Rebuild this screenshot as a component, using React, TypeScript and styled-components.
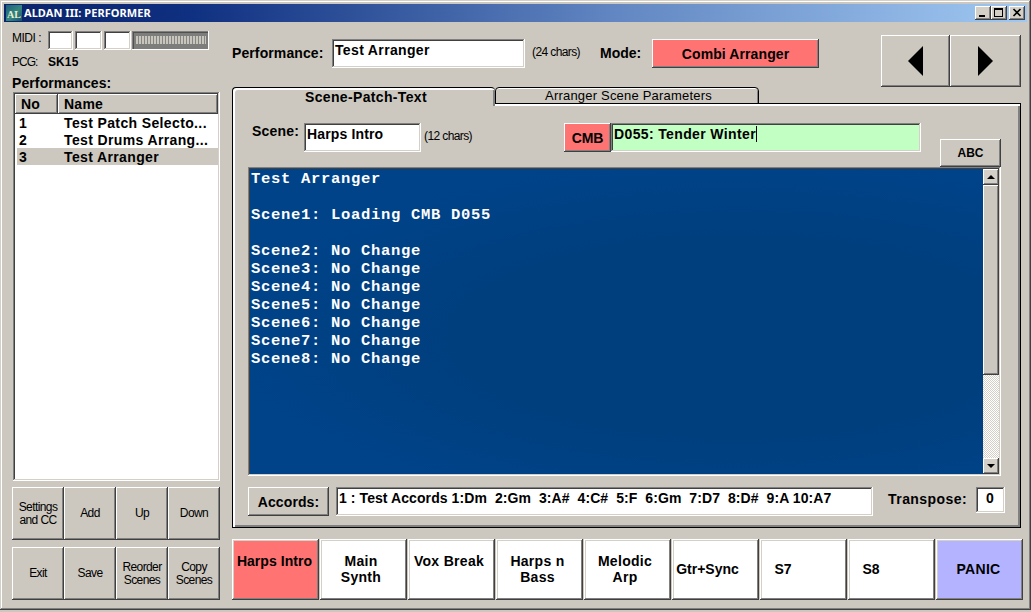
import React, { FC, ReactNode } from "react";
import styled, { createGlobalStyle, css } from "styled-components";

const FACE = "#ccc8bf";
const RED = "#ff7373";

const raised = css`
  box-shadow: inset -1px -1px #404040, inset 1px 1px #fff,
    inset -2px -2px #808080;
`;

const sunken = css`
  box-shadow: inset -1px -1px #fff, inset 1px 1px #808080,
    inset -2px -2px #d4d0c8, inset 2px 2px #404040;
`;

const GlobalStyle = createGlobalStyle`
  * {
    box-sizing: border-box;
  }
  body {
    margin: 0;
    background: ${FACE};
    color: #000;
    font-family: "Liberation Sans", Arial, sans-serif;
    font-size: 13px;
    line-height: 16px;
    overflow: hidden;
  }
`;

const Window = styled.div`
  width: 1031px;
  height: 610px;
  padding: 4px;
  background: ${FACE};
  box-shadow: inset -1px -1px #404040, inset 1px 1px #d4d0c8,
    inset -2px -2px #808080, inset 2px 2px #fff;
`;

const TitleBar = styled.div`
  display: flex;
  align-items: center;
  height: 18px;
  padding: 0 2px;
  background: linear-gradient(90deg, #0a246a, #0f2f80 18%, #6287c2 60%, #a0c8f2);
`;

const TitleText = styled.div`
  flex: 1;
  margin-left: 2px;
  color: #fff;
  font-family: "Noto Sans", sans-serif;
  font-weight: bold;
  font-size: 11px;
  letter-spacing: 0.05px;
`;

const CaptionButton = styled.div<{ $gap?: number }>`
  width: 16px;
  height: 14px;
  margin-left: ${({ $gap }) => $gap || 0}px;
  background: #d4d0c8;
  ${raised}
  svg {
    display: block;
  }
`;

const Body = styled.div`
  display: flex;
  gap: 12px;
  padding: 9px 0 0 8px;
`;

const Sidebar = styled.div`
  width: 208px;
  display: flex;
  flex-direction: column;
`;

const Text = styled.span<{ $size?: number; $space?: number; $bold?: boolean }>`
  display: block;
  font-size: ${({ $size }) => $size || 13}px;
  font-weight: ${({ $bold }) => ($bold ? "bold" : "normal")};
  letter-spacing: ${({ $space }) => $space || 0}px;
  white-space: pre;
`;

const MidiRow = styled.div`
  display: flex;
  height: 19px;
`;

const MidiLabel = styled.div`
  width: 36px;
  margin-top: -1px;
`;

const Lamp = styled.div<{ $width: number }>`
  width: ${({ $width }) => $width}px;
  height: 19px;
  margin-right: 2px;
  background: #fff;
  ${sunken}
`;

const Meter = styled.div`
  width: 77px;
  height: 19px;
  margin-left: -1px;
  padding: 5px 3px 6px 4px;
  background: #7d7d7b;
  box-shadow: inset -1px -1px #fff, inset 1px 1px #808080,
    inset 2px 2px #505050;
`;

const MeterBars = styled.div`
  height: 8px;
  background: repeating-linear-gradient(90deg, #c8c5bd 0 2px, #858583 2px 3px);
`;

const PcgRow = styled.div`
  display: flex;
  margin-top: 4px;
`;

const PcgLabel = styled.div`
  width: 36px;
`;

const ListTitle = styled.div`
  margin-top: 5px;
  height: 17px;
`;

const ListView = styled.div`
  height: 389px;
  margin-left: 1px;
  padding: 2px;
  background: #fff;
  ${sunken}
`;

const ListHeader = styled.div`
  display: flex;
  height: 20px;
  background: ${FACE};
`;

const HeaderCell = styled.div<{ $width: number }>`
  width: ${({ $width }) => $width}px;
  padding: 2px 0 0 6px;
  ${raised}
`;

const ListRow = styled.div<{ $selected?: boolean }>`
  display: grid;
  grid-template-columns: 45px 1fr;
  height: 17px;
  padding: 1px 0 0 2px;
  margin-left: 2px;
  background: ${({ $selected }) => ($selected ? FACE : "#fff")};
`;

const ButtonGrid = styled.div`
  display: grid;
  grid-template-columns: repeat(4, 52px);
  row-gap: 7px;
  margin-top: 6px;
`;

const ToolButton = styled.div`
  display: flex;
  align-items: center;
  justify-content: center;
  height: 53px;
  text-align: center;
  font-size: 12px;
  line-height: 13px;
  letter-spacing: -0.6px;
  white-space: pre;
  ${raised}
`;

const Main = styled.div`
  width: 791px;
`;

const TopRow = styled.div`
  display: flex;
  height: 56px;
  padding-top: 8px;
`;

const Field = styled.div<{ $width: number; $height?: number; $color?: string }>`
  display: flex;
  width: ${({ $width }) => $width}px;
  height: ${({ $height }) => $height || 29}px;
  padding: 3px 0 0 3px;
  background: ${({ $color }) => $color || "#fff"};
  ${sunken}
`;

const Caption = styled.div<{ $width: number; $top?: number; $left?: number }>`
  width: ${({ $width }) => $width}px;
  padding-top: ${({ $top }) => $top || 0}px;
  padding-left: ${({ $left }) => $left || 0}px;
`;

const PushButton = styled.div<{ $width: number; $height?: number; $color?: string }>`
  display: flex;
  flex-shrink: 0;
  align-items: center;
  justify-content: center;
  width: ${({ $width }) => $width}px;
  height: ${({ $height }) => $height || 29}px;
  background: ${({ $color }) => $color || FACE};
  ${raised}
`;

const NavGroup = styled.div`
  display: flex;
  margin: -4px 0 0 62px;
`;

const Tabs = styled.div`
  display: flex;
  height: 16px;
`;

/* tall enough to cover the top edge of the page below it */
const ActiveTab = styled.div`
  position: relative;
  z-index: 1;
  width: 263px;
  height: 19px;
  padding: 1px 0 0 4px;
  text-align: center;
  background: ${FACE};
  border-top: 1px solid #000;
  border-left: 1px solid #000;
  border-radius: 4px 4px 0 0;
  box-shadow: inset 2px 2px #fff, inset -2px 0 #808080;
`;

const Tab = styled.div`
  width: 264px;
  height: 17px;
  padding-left: 3px;
  text-align: center;
  border: 1px solid #000;
  border-radius: 4px 4px 0 0;
  box-shadow: inset 0 1px #fff, inset -1px 0 #808080;
`;

const Page = styled.div`
  width: 789px;
  height: 425px;
  padding: 19px 0 0 15px;
  border: 1px solid #000;
  box-shadow: inset 2px 2px #fff, inset -2px -2px #808080;
`;

const SceneRow = styled.div`
  display: flex;
  height: 44px;
`;

const Caret = styled.div`
  width: 1px;
  height: 16px;
  background: #000;
`;

const Notes = styled.div`
  display: flex;
  justify-content: space-between;
  width: 753px;
  height: 309px;
  padding: 2px;
  background: radial-gradient(ellipse at 65% 55%, #003f7e 40%, #004389 75%);
  ${sunken}
`;

const NotesText = styled.pre`
  margin: 1px 0 0 1px;
  color: #fff;
  font: bold 15.5px/18px "Liberation Mono", monospace;
  letter-spacing: 0.7px;
`;

const ScrollBar = styled.div`
  display: flex;
  flex-direction: column;
  width: 16px;
  background: repeating-conic-gradient(#fff 0 25%, #d4d0c8 0 50%) 0 0 / 2px 2px;
`;

const ScrollButton = styled.div`
  width: 16px;
  height: 16px;
  background: #d4d0c8;
  ${raised}
  svg {
    display: block;
  }
`;

const Thumb = styled.div`
  height: 190px;
  margin-bottom: auto;
  background: ${FACE};
  ${raised}
`;

const AccordRow = styled.div`
  display: flex;
  margin-top: 11px;
`;

const SceneBar = styled.div`
  display: flex;
  gap: 1px;
  margin-top: 11px;
`;

const SceneButton = styled.div<{ $color?: string; $shift?: number }>`
  display: flex;
  align-items: center;
  justify-content: center;
  width: 87px;
  height: 61px;
  padding-right: ${({ $shift }) => $shift || 0}px;
  background: ${({ $color }) => $color || "#fff"};
  box-shadow: inset -1px -1px #404040, inset 1px 1px #fff,
    inset -2px -2px #808080, inset 2px 2px #d4d0c8;
`;

const SceneName = styled.div<{ $tall?: boolean; $space?: number }>`
  height: ${({ $tall }) => ($tall ? 33 : 17)}px;
  text-align: center;
  font-size: 14px;
  font-weight: bold;
  letter-spacing: ${({ $space = 0.3 }) => $space}px;
  white-space: pre;
`;

const Bold: FC<{ children: ReactNode; space?: number }> = ({
  children,
  space = 0.25
}) => (
  <Text $bold $size={14} $space={space}>
    {children}
  </Text>
);

const performances = [
  "Test Patch Selecto...",
  "Test Drums Arrang...",
  "Test Arranger"
];

const tools = [
  "Settings\nand CC",
  "Add",
  "Up",
  "Down",
  "Exit",
  "Save",
  "Reorder\nScenes",
  "Copy\nScenes"
];

const scenes = [
  { name: "Harps Intro", tall: true, color: RED, shift: 2, space: 0.05 },
  { name: "Main\nSynth", tall: true, shift: 5 },
  { name: "Vox Break", tall: true, shift: 5 },
  { name: "Harps n\nBass", tall: true, shift: 4 },
  { name: "Melodic\nArp", tall: true, shift: 5 },
  { name: "Gtr+Sync", shift: 16, space: 0 },
  { name: "S7", shift: 41, space: 0 },
  { name: "S8", shift: 41, space: 0 },
  { name: "PANIC", color: "#b3b3ff", shift: 2 }
];

const notes = `Test Arranger

Scene1: Loading CMB D055

Scene2: No Change
Scene3: No Change
Scene4: No Change
Scene5: No Change
Scene6: No Change
Scene7: No Change
Scene8: No Change`;

const AppIcon = () => (
  <svg width="16" height="16" viewBox="0 0 16 16">
    <defs>
      <linearGradient id="teal" x1="0" y1="0" x2="1" y2="1">
        <stop offset="0" stopColor="#1d5f7c" />
        <stop offset="0.55" stopColor="#35877f" />
        <stop offset="1" stopColor="#17506b" />
      </linearGradient>
    </defs>
    <rect width="16" height="16" fill="url(#teal)" />
    <text
      x="1"
      y="12.5"
      fill="#e9f0cf"
      fontFamily="Liberation Serif, serif"
      fontWeight="bold"
      fontSize="10"
      textLength="14"
    >
      AL
    </text>
  </svg>
);

export default function App() {
  return (
    <>
      <GlobalStyle />
      <Window>
        <TitleBar>
          <AppIcon />
          <TitleText>ALDAN III: PERFORMER</TitleText>
          <CaptionButton>
            <svg width="16" height="14">
              <path d="M4 9h6v2H4z" />
            </svg>
          </CaptionButton>
          <CaptionButton>
            <svg width="16" height="14" shapeRendering="crispEdges">
              <path d="M3 2h9v9H3zM4 4v6h7V4z" fillRule="evenodd" />
            </svg>
          </CaptionButton>
          <CaptionButton $gap={2}>
            <svg width="16" height="14">
              <path d="M4.5 3l7 7M11.5 3l-7 7" stroke="#000" strokeWidth="1.6" />
            </svg>
          </CaptionButton>
        </TitleBar>
        <Body>
          <Sidebar>
            <MidiRow>
              <MidiLabel>
                <Text $size={12} $space={-0.5}>
                  MIDI :
                </Text>
              </MidiLabel>
              <Lamp $width={25} />
              <Lamp $width={27} />
              <Lamp $width={27} />
              <Meter>
                <MeterBars />
              </Meter>
            </MidiRow>
            <PcgRow>
              <PcgLabel>
                <Text $size={12} $space={-1}>
                  PCG:
                </Text>
              </PcgLabel>
              <Text $bold $size={12} $space={0.1}>
                SK15
              </Text>
            </PcgRow>
            <ListTitle>
              <Bold space={0.1}>Performances:</Bold>
            </ListTitle>
            <ListView>
              <ListHeader>
                <HeaderCell $width={43}>
                  <Bold>No</Bold>
                </HeaderCell>
                <HeaderCell $width={160}>
                  <Bold>Name</Bold>
                </HeaderCell>
              </ListHeader>
              {performances.map((name, i) => (
                <ListRow key={name} $selected={i === 2}>
                  <Bold>{i + 1}</Bold>
                  <Bold space={0.37}>{name}</Bold>
                </ListRow>
              ))}
            </ListView>
            <ButtonGrid>
              {tools.map(name => (
                <ToolButton key={name}>{name}</ToolButton>
              ))}
            </ButtonGrid>
          </Sidebar>
          <Main>
            <TopRow>
              <Caption $width={100} $top={6}>
                <Bold space={0.1}>Performance:</Bold>
              </Caption>
              <Field $width={193}>
                <Bold space={0.35}>Test Arranger</Bold>
              </Field>
              <Caption $width={75} $top={5} $left={7}>
                <Text $size={12} $space={-0.6}>
                  (24 chars)
                </Text>
              </Caption>
              <Caption $width={52} $top={6}>
                <Bold space={0}>Mode:</Bold>
              </Caption>
              <PushButton $width={167} $color={RED}>
                <Bold space={0.1}>Combi Arranger</Bold>
              </PushButton>
              <NavGroup>
                <PushButton $width={69} $height={52}>
                  <svg width="15" height="30">
                    <path d="M15 0v30L0 15z" />
                  </svg>
                </PushButton>
                <PushButton $width={71} $height={52}>
                  <svg width="15" height="30">
                    <path d="M0 0v30L15 15z" />
                  </svg>
                </PushButton>
              </NavGroup>
            </TopRow>
            <Tabs>
              <ActiveTab>
                <Bold space={0.35}>Scene-Patch-Text</Bold>
              </ActiveTab>
              <Tab>
                <Text $space={0.2}>Arranger Scene Parameters</Text>
              </Tab>
            </Tabs>
            <Page>
              <SceneRow>
                <Caption $width={56} $left={4}>
                  <Bold space={0.2}>Scene:</Bold>
                </Caption>
                <Field $width={117}>
                  <Bold space={0.15}>Harps Intro</Bold>
                </Field>
                <Caption $width={143} $top={5} $left={3}>
                  <Text $size={12} $space={-0.6}>
                    (12 chars)
                  </Text>
                </Caption>
                <PushButton $width={47} $color={RED}>
                  <Bold space={-0.1}>CMB</Bold>
                </PushButton>
                <Field $width={310} $color="#c2ffc2">
                  <Bold space={0.37}>D055: Tender Winter</Bold>
                  <Caret />
                </Field>
                <Caption $width={80} $top={16} $left={19}>
                  <PushButton $width={61} $height={28}>
                    <Text $bold $size={12}>
                      ABC
                    </Text>
                  </PushButton>
                </Caption>
              </SceneRow>
              <Notes>
                <NotesText>{notes}</NotesText>
                <ScrollBar>
                  <ScrollButton>
                    <svg width="16" height="16">
                      <path d="M4 10h8L8 6z" />
                    </svg>
                  </ScrollButton>
                  <Thumb />
                  <ScrollButton>
                    <svg width="16" height="16">
                      <path d="M4 6h8l-4 4z" />
                    </svg>
                  </ScrollButton>
                </ScrollBar>
              </Notes>
              <AccordRow>
                <PushButton $width={81}>
                  <Bold space={0.1}>Accords:</Bold>
                </PushButton>
                <Caption $width={559} $left={7}>
                  <Field $width={537}>
                    <Bold space={0.08}>
                      {"1 : Test Accords 1:Dm  2:Gm  3:A#  4:C#  5:F  6:Gm  7:D7  8:D#  9:A 10:A7"}
                    </Bold>
                  </Field>
                </Caption>
                <Caption $width={88} $top={4}>
                  <Bold space={0.45}>Transpose:</Bold>
                </Caption>
                <Field $width={29} $height={26}>
                  <Caption $width={22} $left={7}>
                    <Bold>0</Bold>
                  </Caption>
                </Field>
              </AccordRow>
            </Page>
            <SceneBar>
              {scenes.map(({ name, tall, color, shift, space }) => (
                <SceneButton key={name} $color={color} $shift={shift}>
                  <SceneName $tall={tall} $space={space}>
                    {name}
                  </SceneName>
                </SceneButton>
              ))}
            </SceneBar>
          </Main>
        </Body>
      </Window>
    </>
  );
}
